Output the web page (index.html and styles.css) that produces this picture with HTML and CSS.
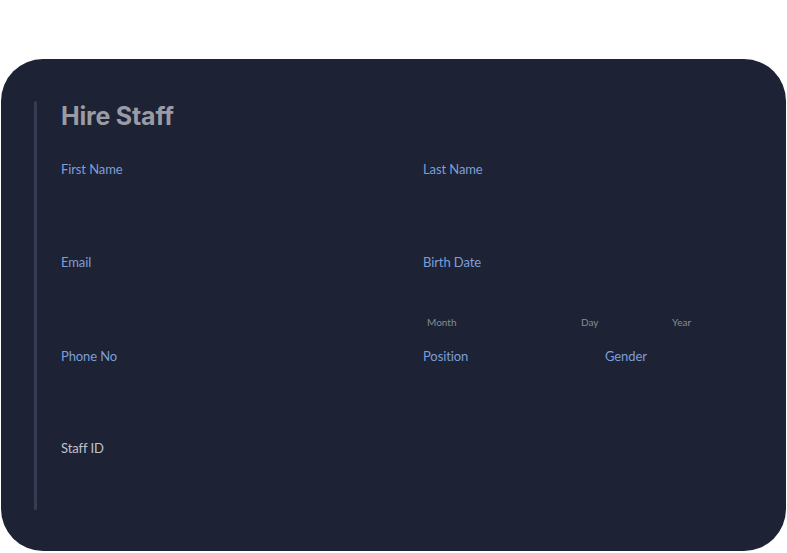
FILE: index.html
```html
<!DOCTYPE html>
<html lang="en">
<head>
<meta charset="utf-8">
<title>Hire Staff</title>
<link rel="stylesheet" href="styles.css">
</head>
<body>
<div class="card">
  <div class="rail"></div>
  <form class="form">
    <h1 class="title">Hire Staff</h1>
    <div class="grid">
      <div class="field"><label class="label">First Name</label></div>
      <div class="field"><label class="label">Last Name</label></div>
      <div class="field"><label class="label">Email</label></div>
      <div class="field birth">
        <label class="label">Birth Date</label>
        <div class="dateparts">
          <span class="part month">Month</span>
          <span class="part day">Day</span>
          <span class="part year">Year</span>
        </div>
      </div>
      <div class="field"><label class="label">Phone No</label></div>
      <div class="field split">
        <label class="label">Position</label>
        <label class="label">Gender</label>
      </div>
      <div class="field"><label class="label light">Staff ID</label></div>
    </div>
  </form>
</div>
</body>
</html>
```

FILE: styles.css
```css
html, body {
  margin: 0;
  padding: 0;
  background: #ffffff;
}
body {
  padding: 59px 1px 0 1px;
  font-family: Lato, "Noto Sans", sans-serif;
}
.card {
  width: 785px;
  height: 492px;
  box-sizing: border-box;
  background: #1e2235;
  border-radius: 42px;
  display: flex;
  padding: 42px 0 0 33px;
}
.rail {
  width: 3px;
  height: 409px;
  background: #363c52;
  border-radius: 2px;
  flex: none;
}
.form {
  margin-left: 24px;
  flex: 1;
}
.title {
  margin: 0;
  font-family: Inter, "Noto Sans", sans-serif;
  font-weight: 700;
  font-size: 25px;
  line-height: 28px;
  padding-top: 1px;
  color: #9a9ba5;
  letter-spacing: -0.2px;
}
.grid {
  margin-top: 31px;
  display: grid;
  grid-template-columns: 362px 300px;
  grid-template-rows: 93px 94px 92px 40px;
}
.field {
  position: relative;
}
.label {
  display: block;
  font-size: 13px;
  line-height: 16px;
  color: #7d9fd6;
  letter-spacing: -0.1px;
}
.label.light {
  color: #c0c3cd;
}
.split {
  display: grid;
  grid-template-columns: 182px 120px;
}
.dateparts {
  display: grid;
  grid-template-columns: 154px 91px 40px;
  margin-top: 46px;
  padding-left: 4px;
}
.part {
  font-size: 10px;
  line-height: 12px;
  color: #8a8b90;
}
```
